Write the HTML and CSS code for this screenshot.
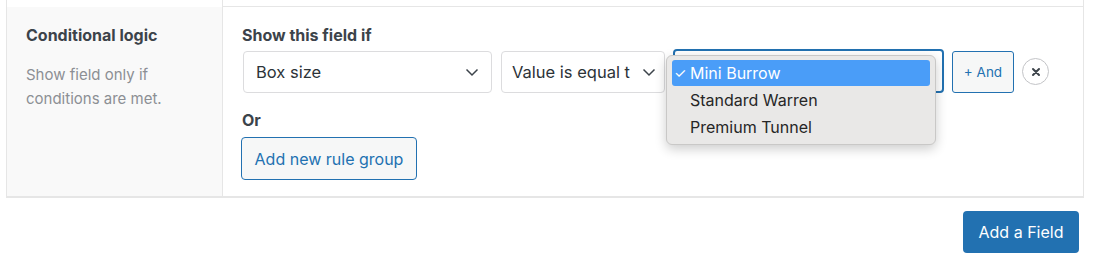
FILE: index.html
```html
<!DOCTYPE html>
<html>
<head>
<meta charset="utf-8">
<link rel="stylesheet" href="styles.css">
</head>
<body>
<div class="table">
  <div class="row prev">
    <div class="label-cell"></div>
    <div class="input-cell"></div>
  </div>
  <div class="row main">
    <div class="label-cell">
      <div class="label">Conditional logic</div>
      <p class="desc">Show field only if conditions are met.</p>
    </div>
    <div class="input-cell">
      <div class="heading">Show this field if</div>
      <div class="rule">
        <div class="select s1"><span>Box size</span><svg class="chev" viewBox="0 0 16 16"><path d="M2.5 5.5l5.5 5.5 5.5-5.5" fill="none" stroke="#3c434a" stroke-width="1.5"/></svg></div>
        <div class="select s2"><span>Value is equal t</span><svg class="chev" viewBox="0 0 16 16"><path d="M2.5 5.5l5.5 5.5 5.5-5.5" fill="none" stroke="#3c434a" stroke-width="1.5"/></svg></div>
        <div class="select s3 focused"></div>
        <button class="btn-and">+ And</button>
        <button class="btn-remove"><svg viewBox="0 0 12 12"><path d="M3 3l6 6M9 3l-6 6" stroke="#3c434a" stroke-width="2" stroke-linecap="round"/></svg></button>
        <ul class="popup">
          <li class="sel"><span class="check">✓</span>Mini Burrow</li>
          <li><span class="check"></span>Standard Warren</li>
          <li><span class="check"></span>Premium Tunnel</li>
        </ul>
      </div>
      <div class="heading or">Or</div>
      <button class="btn-group">Add new rule group</button>
    </div>
  </div>
</div>
<div class="footer">
  <button class="btn-primary">Add a Field</button>
</div>
</body>
</html>
```

FILE: styles.css
```css
* { box-sizing: border-box; }
body {
  margin: 0;
  background: #fff;
  font-family: Inter, "Liberation Sans", Arial, sans-serif;
  color: #3c434a;
}
.table {
  margin: 0 9px 0 6px;
  border-left: 1px solid #e6e6e6;
  border-right: 1px solid #e6e6e6;
  border-bottom: 2px solid #e6e6e6;
}
.row { display: flex; }
.row.prev { height: 6px; }
.row.prev .label-cell { background: #fff; }
.row.main { border-top: 1px solid #e6e6e6; height: 190px; }
.label-cell {
  width: 216px;
  flex: none;
  background: #f9f9f9;
  border-right: 1px solid #e6e6e6;
  padding: 18px 19px;
}
.label {
  font-size: 16px;
  font-weight: 700;
  color: #3c434a;
  line-height: 20px;
}
.desc {
  margin: 18px 0 0;
  font-size: 15px;
  line-height: 24px;
  color: #8c8f94;
  width: 160px;
}
.input-cell {
  flex: 1;
  padding: 18px 0 0 19px;
}
.heading {
  font-size: 16px;
  font-weight: 700;
  line-height: 20px;
  color: #3c434a;
}
.rule {
  position: relative;
  display: flex;
  align-items: center;
  margin-top: 5px;
  height: 43px;
}
.select {
  height: 42px;
  border: 1px solid #dcdcde;
  border-radius: 4px;
  background: #fff;
  display: flex;
  align-items: center;
  justify-content: space-between;
  padding: 0 10px 0 12px;
  font-size: 16.5px;
  color: #2c3338;
  margin-right: 9px;
}
.s1 { width: 249px; margin-left: 1px; padding-right: 11px; }
.s2 { width: 164px; padding-left: 10px; padding-right: 7px; margin-right: 8px; white-space: nowrap; overflow: hidden; }
.s3 { width: 271px; margin-right: 8px; }
.focused {
  border: 2px solid #2271b1;
  height: 44px;
  margin-top: -2px;
}
.chev { width: 16px; height: 16px; flex: none; }
.btn-and {
  width: 62px;
  height: 42px;
  border: 1px solid #2271b1;
  background: #f6f7f7;
  color: #2271b1;
  border-radius: 3px;
  font-family: inherit;
  font-size: 13.5px;
  padding: 0;
  margin-right: 8px;
}
.btn-remove {
  width: 27px;
  height: 27px;
  border-radius: 50%;
  border: 1px solid #c3c4c7;
  background: #fff;
  padding: 0;
  display: flex;
  align-items: center;
  justify-content: center;
}
.btn-remove svg { width: 12px; height: 12px; }
.popup {
  position: absolute;
  left: 424px;
  top: 5px;
  width: 270px;
  margin: 0;
  padding: 4px 5px 3px;
  list-style: none;
  background: #e9e8e7;
  border: 1px solid #c9c8c7;
  border-radius: 6px;
  box-shadow: 0 4px 12px rgba(0,0,0,0.2);
  z-index: 2;
}
.popup li {
  height: 27px;
  line-height: 27px;
  font-size: 16px;
  color: #262626;
  border-radius: 3px;
  padding-left: 2px;
  display: flex;
}
.popup li.sel { background: #4a9df8; color: #fff; height: 26px; line-height: 26px; margin-bottom: 1px; }
.check { width: 16px; font-size: 14px; }
.or { margin-top: 17px; }
.btn-group {
  margin-top: 7px;
  margin-left: -1px;
  height: 43px;
  width: 176px;
  border: 1px solid #2271b1;
  border-radius: 4px;
  background: #f6f7f7;
  color: #2271b1;
  font-family: inherit;
  font-size: 16px;
  padding: 0;
}
.footer {
  display: flex;
  justify-content: flex-end;
  padding: 13px 14px 0 0;
}
.btn-primary {
  width: 116px;
  height: 42px;
  background: #2271b1;
  color: #fff;
  border: none;
  border-radius: 4px;
  font-family: inherit;
  font-size: 16px;
  padding: 0;
}
```
